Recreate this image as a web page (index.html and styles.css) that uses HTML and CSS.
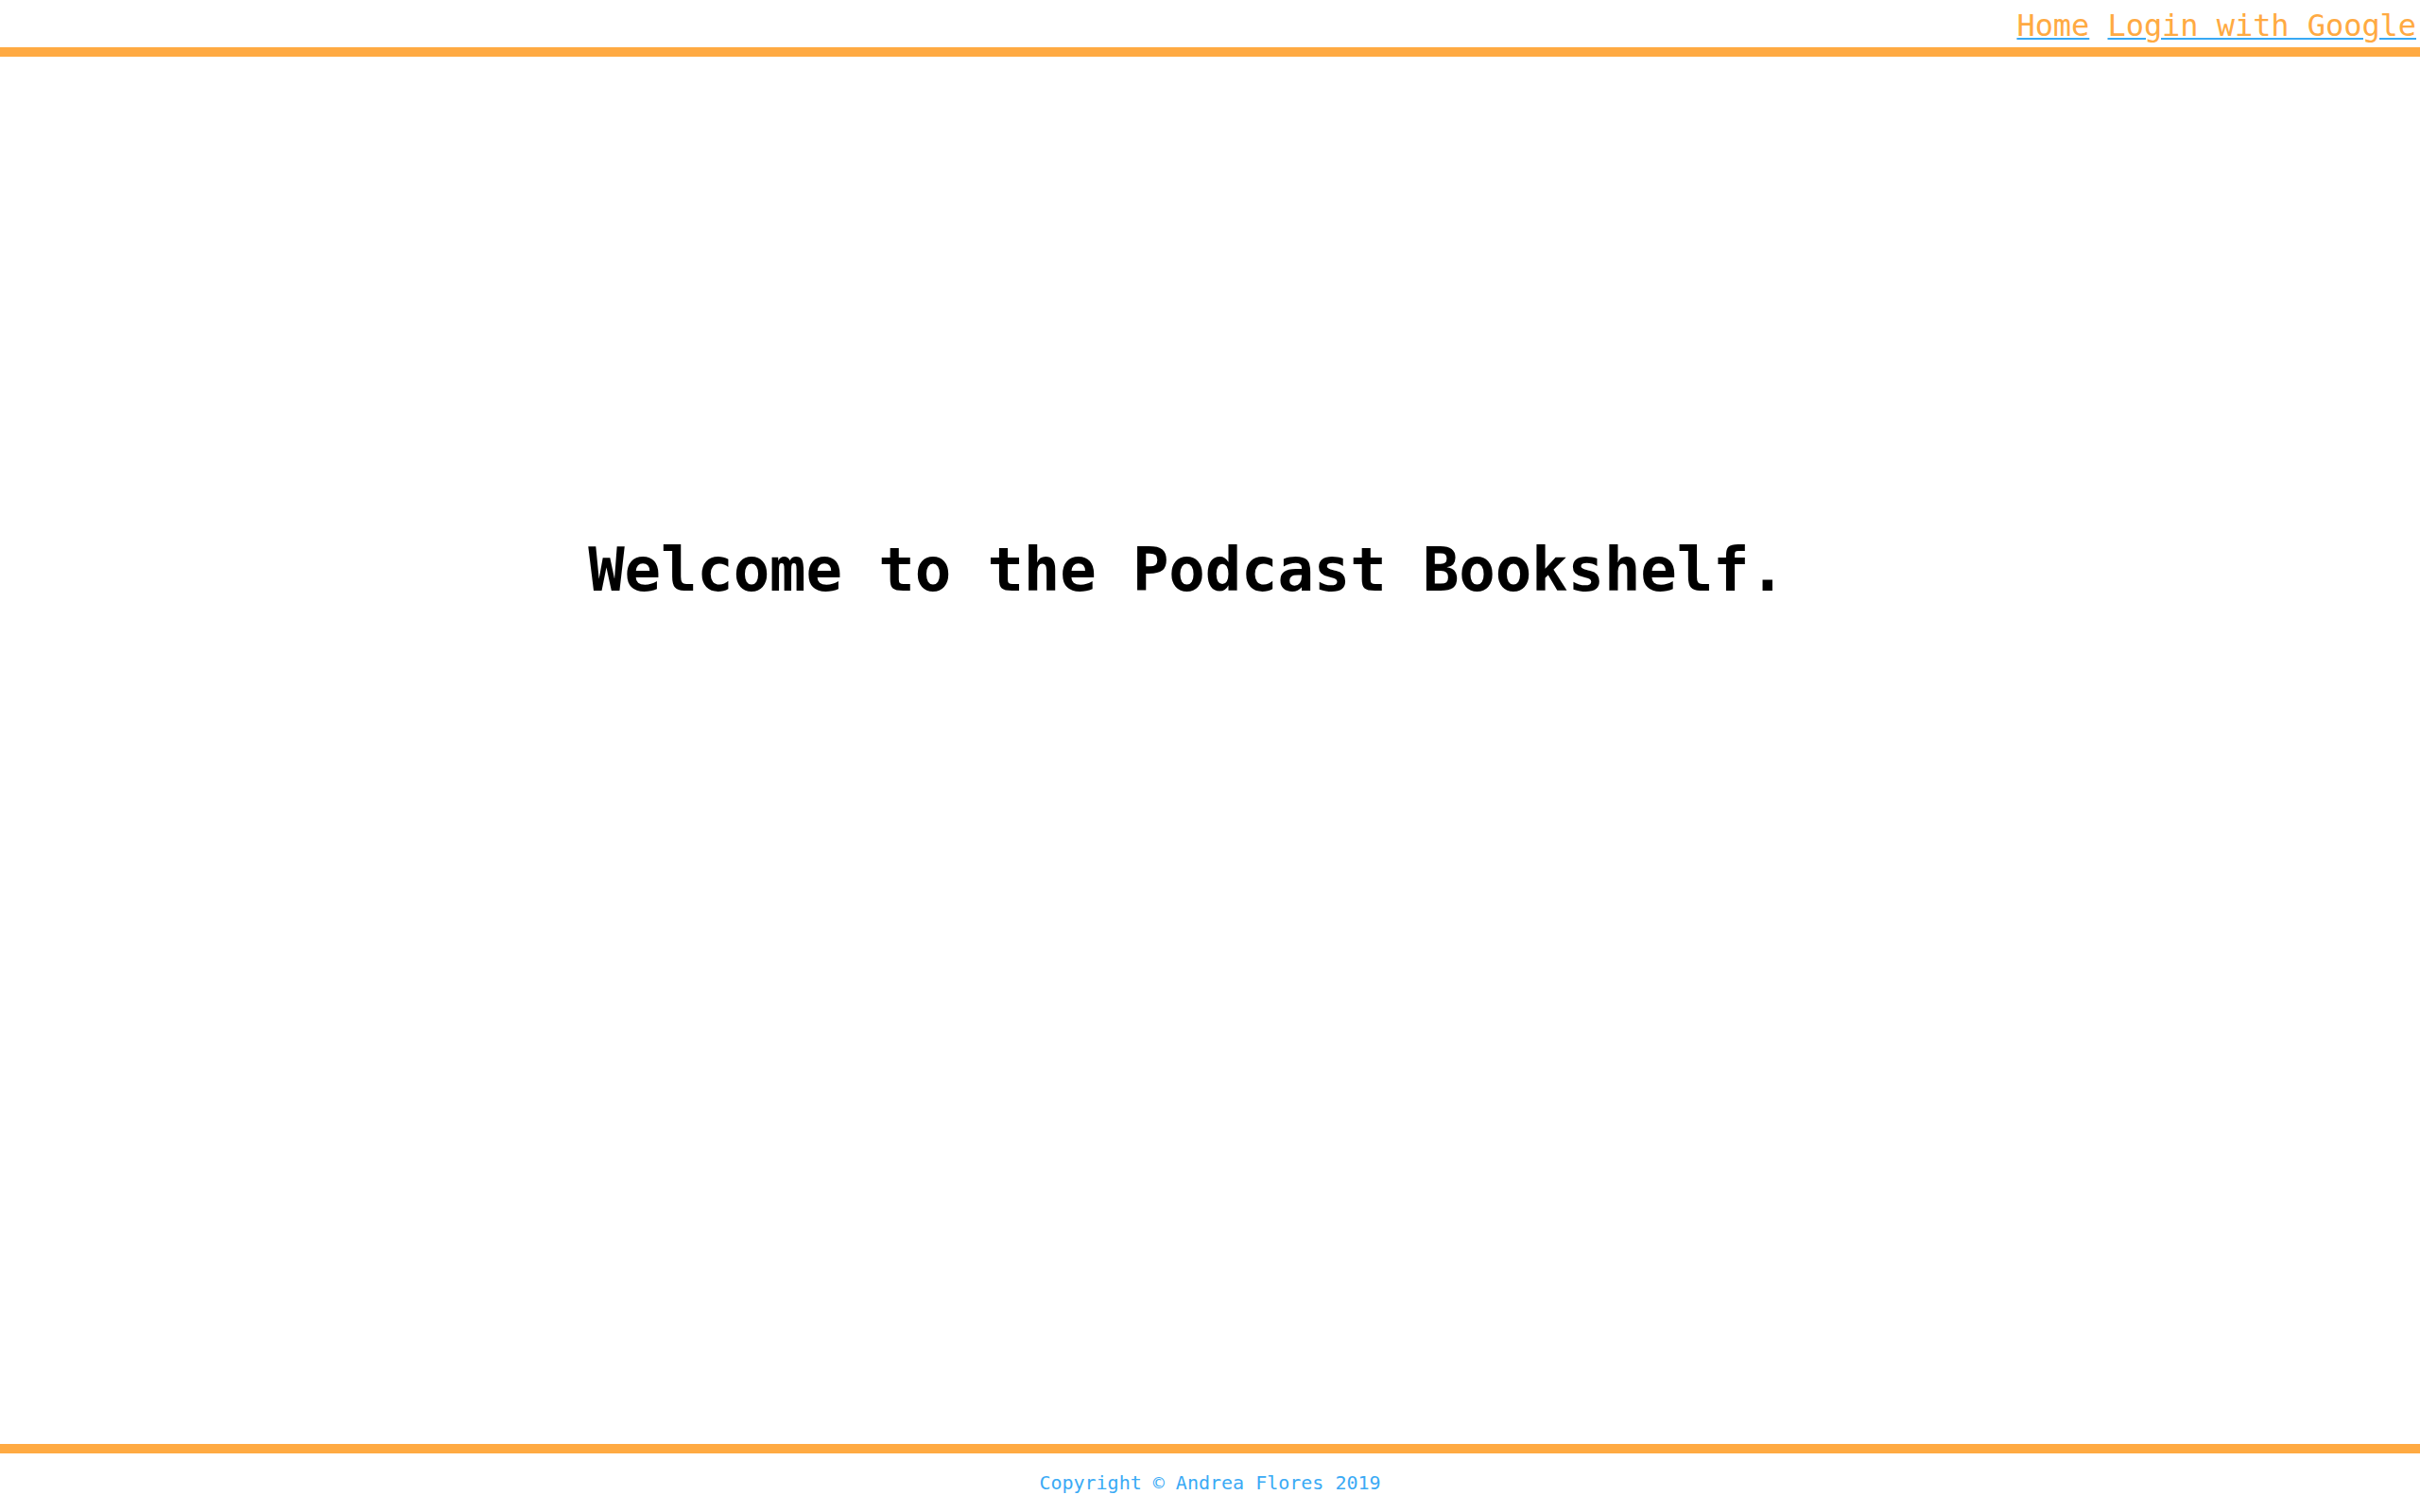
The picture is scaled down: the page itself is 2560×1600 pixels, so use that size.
FILE: index.html
```html
<!DOCTYPE html>
<html lang="en">
<head>
<meta charset="utf-8">
<title>Podcast Bookshelf</title>
<link rel="stylesheet" href="styles.css">
</head>
<body>
<div class="page">
  <header class="topbar">
    <nav class="nav">
      <a class="nav-link" href="#">Home</a> <a class="nav-link" href="#">Login with Google</a>
    </nav>
  </header>
  <main class="main">
    <h1 class="welcome">Welcome to the Podcast Bookshelf.</h1>
  </main>
  <footer class="footer">
    <p class="copyright">Copyright © Andrea Flores 2019</p>
  </footer>
</div>
</body>
</html>
```

FILE: styles.css
```css
html, body {
  margin: 0;
  padding: 0;
  background: #ffffff;
}

body {
  font-family: "DejaVu Sans Mono", "Liberation Mono", monospace;
}

.page {
  min-height: 100vh;
  display: flex;
  flex-direction: column;
}

.topbar {
  height: 40px;
  padding: 7px 4px 3px 0;
  border-bottom: 10px solid #ffaa42;
  text-align: right;
}

.nav {
  font-size: 32px;
  line-height: 40px;
  white-space: nowrap;
  letter-spacing: -0.06px;
}

.nav-link {
  color: #ffaa42;
  text-decoration: underline;
  text-decoration-color: #38a9f4;
  text-decoration-thickness: 2px;
  text-underline-offset: 2px;
}

.main {
  flex: 1;
  padding: 511px 49px 0 0;
}

.welcome {
  margin: 0;
  font-size: 64px;
  line-height: 64px;
  font-weight: bold;
  letter-spacing: -0.15px;
  color: #000000;
  text-align: center;
}

.footer {
  border-top: 10px solid #ffaa42;
  padding: 19px 0;
}

.copyright {
  margin: 0;
  font-size: 20px;
  line-height: 24px;
  color: #3aaaf5;
  text-align: center;
}
```
